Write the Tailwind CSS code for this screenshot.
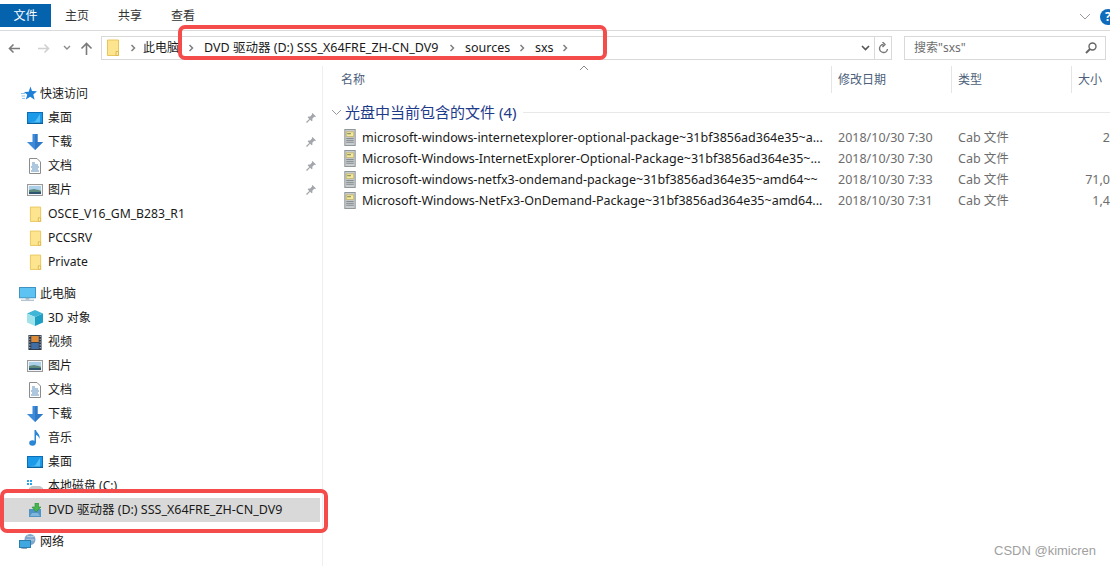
<!DOCTYPE html>
<html lang="zh-CN">
<head>
<meta charset="utf-8">
<script src="https://cdn.jsdelivr.net/npm/@tailwindcss/browser@4"></script>
</head>
<body class="m-0 bg-white">
<svg class="hidden" width="0" height="0">
  <defs>
    <symbol id="folder" viewBox="0 0 14 18">
      <path d="M1.500 1h11v15.500h-11z" fill="#fde58f" stroke="#e8c65a"/>
      <path d="M10 16.500v-4h2.500v4z" fill="#fbe9a8" stroke="#e0b94a"/>
    </symbol>
    <symbol id="chev" viewBox="0 0 6 8">
      <path d="M1.500 1l3 3-3 3" fill="none" stroke="#808080" stroke-width="1.500"/>
    </symbol>
    <symbol id="pin" viewBox="0 0 12 12">
      <path d="M7.500 1l3.500 3.500-1 .6-.7-.3-2 2 .2 1.700-.8.800-1.600-1.600L2 11l-1-1 3.300-3.100-1.700-1.700.8-.8 1.700.2 2-2-.3-.7z" fill="#a3a7ab"/>
    </symbol>
    <symbol id="desktop" viewBox="0 0 16 12">
      <rect x=".5" y=".5" width="15" height="10.500" fill="#1a9ae8" stroke="#0b6fb8"/>
      <path d="M1 10.500L8 9.500 13 2v8.500z" fill="#53bdf6"/>
      <rect x="0" y="11" width="16" height="1" fill="#0a5f99"/>
    </symbol>
    <symbol id="down" viewBox="0 0 16 16">
      <path d="M5.500 0h5v8H16l-8 8-8-8h5.500z" fill="#3d8ad9"/>
      <path d="M8 0h2.500v8H16l-8 8z" fill="#2f78c5"/>
    </symbol>
    <symbol id="doc" viewBox="0 0 12 16">
      <path d="M.5.500h7.500l3.500 3.500v11.500H.5z" fill="#fff" stroke="#8c8c8c"/>
      <path d="M3 5h3M3 7h6M2 9h8M3 11h6M2 13h8" stroke="#5a8fbf" stroke-width="1"/>
    </symbol>
    <symbol id="pic" viewBox="0 0 16 12">
      <rect x=".5" y=".5" width="15" height="11" fill="#f2f2f2" stroke="#9a9a9a"/>
      <rect x="2" y="2" width="12" height="4" fill="#a9cfe9"/>
      <path d="M2 6l5-1 7 1.500V10H2z" fill="#5d8a7c"/>
      <path d="M2 8h12v2H2z" fill="#2f5470"/>
    </symbol>
    <symbol id="star" viewBox="0 0 16 16">
      <path d="M9.500.500l1.500 4.500 5 .3-3.700 3.200 1.300 5.200-4.400-3L4.800 13.500l1.500-4.800L3 6l4.700-.3z" fill="#1e7fd6"/>
      <path d="M0 7.500h4M.5 10h3.500M1 12.500h3" stroke="#8cc1ee" stroke-width="1"/>
    </symbol>
    <symbol id="pc" viewBox="0 0 18 16">
      <rect x=".5" y=".5" width="17" height="11" fill="#5cc3f2" stroke="#3a8fbe"/>
      <path d="M7 11.500h4v2H7z" fill="#9bb6c7"/>
      <path d="M2 13.500h14v1.500H2z" fill="#b5c4ce"/>
    </symbol>
    <symbol id="cube" viewBox="0 0 16 16">
      <path d="M8 0l8 3.500-8 3.500-8-3.500z" fill="#3fb6d6"/>
      <path d="M0 3.500l8 3.500v9l-8-3.500z" fill="#9ee3ea"/>
      <path d="M16 3.500L8 7v9l8-3.500z" fill="#1f9fc4"/>
    </symbol>
    <symbol id="film" viewBox="0 0 14 16">
      <rect width="14" height="16" fill="#2c3a4a"/>
      <rect x="3" y="1" width="8" height="6.500" fill="#d98b3a"/>
      <rect x="3" y="8.500" width="8" height="6.500" fill="#3f6ea5"/>
      <path d="M1 1.500h1M1 4.500h1M1 7.500h1M1 10.500h1M1 13.500h1M12 1.500h1M12 4.500h1M12 7.500h1M12 10.500h1M12 13.500h1" stroke="#dfe5ea" stroke-width="1.200"/>
    </symbol>
    <symbol id="note" viewBox="0 0 12 16">
      <ellipse cx="3.500" cy="13" rx="3.300" ry="2.800" fill="#2b86d6"/>
      <path d="M5.500 13V0h1.500c.5 3 4.500 4 3.500 9-.6-2.500-2-3.500-3.500-4v8z" fill="#2b86d6"/>
    </symbol>
    <symbol id="cab" viewBox="0 0 12 18">
      <rect x=".5" y=".5" width="11" height="17" fill="#c9cdd0" stroke="#8d9296"/>
      <path d="M2 3h8v5H2z" fill="#f3e8a0" stroke="#b7a955" stroke-width=".7"/>
      <path d="M2 10h8M2 12h8M2 14h8" stroke="#7e8589" stroke-width="1"/>
      <path d="M3 5h4" stroke="#6d7a4f" stroke-width="1"/>
    </symbol>
  </defs>
</svg>

<div class="relative w-[1110px] h-[566px] overflow-hidden flex flex-col text-[12px] leading-4 text-[#1a1a1a]" style="font-family:'Noto Sans','Noto Sans CJK SC',sans-serif">
  <!-- Ribbon tabs -->
  <div class="h-[31px] shrink-0 flex items-start border-b border-[#dadada] pt-1 relative">
    <div class="w-[51px] h-[23px] pt-[1px] bg-[#0563ae] text-white flex items-center justify-center">文件</div>
    <div class="ml-[14px] h-[23px] pt-[1px] flex items-center gap-[29px] text-[#333]">
      <span>主页</span><span>共享</span><span>查看</span>
    </div>
    <svg class="absolute left-[1079px] top-[13px]" width="12" height="7" viewBox="0 0 12 7"><path d="M1 1l5 5 5-5" fill="none" stroke="#9a9a9a" stroke-width="1"/></svg>
    <div class="absolute left-[1100px] top-[9px] w-[16px] h-[16px] rounded-full bg-[#0f6cbd] text-white text-[12px] font-bold pl-[5px] leading-4">?</div>
  </div>

  <!-- Address row -->
  <div class="h-[24px] mt-[5px] shrink-0 flex items-center">
    <div class="w-[101px] shrink-0 flex items-center">
      <svg class="ml-[8px]" width="13" height="11" viewBox="0 0 13 11"><path d="M12 5.500H1.500M5.500 1.500l-4 4 4 4" fill="none" stroke="#7a7a7a" stroke-width="1.600"/></svg>
      <svg class="ml-[16px]" width="13" height="11" viewBox="0 0 13 11"><path d="M1 5.500h10.500M7.500 1.500l4 4-4 4" fill="none" stroke="#d0d0d0" stroke-width="1.600"/></svg>
      <svg class="ml-[13px]" width="8" height="6" viewBox="0 0 8 6"><path d="M1 1l3 3 3-3" fill="none" stroke="#8a8a8a" stroke-width="1.400"/></svg>
      <svg class="ml-[9px]" width="13" height="13" viewBox="0 0 13 13"><path d="M6.500 13V2M1.500 6.500l5-5 5 5" fill="none" stroke="#7a7a7a" stroke-width="1.600"/></svg>
    </div>
    <div class="w-[791px] h-full shrink-0 border border-[#d9d9d9] flex items-center">
      <svg class="ml-[4px] shrink-0" width="14" height="18"><use href="#folder"/></svg>
      <svg class="ml-[10px] shrink-0" width="6" height="8"><use href="#chev"/></svg>
      <span class="ml-[7px] w-[37px] whitespace-nowrap">此电脑</span>
      <svg class="ml-[8px] shrink-0" width="6" height="8"><use href="#chev"/></svg>
      <span class="ml-[10px] w-[236px] whitespace-nowrap text-[12.5px]">DVD 驱动器 (D:) SSS_X64FRE_ZH-CN_DV9</span>
      <svg class="ml-[9px] shrink-0" width="6" height="8"><use href="#chev"/></svg>
      <span class="ml-[10px] w-[46px] whitespace-nowrap text-[12.5px]">sources</span>
      <svg class="ml-[8px] shrink-0" width="6" height="8"><use href="#chev"/></svg>
      <span class="ml-[10px] w-[19px] whitespace-nowrap text-[12.5px]">sxs</span>
      <svg class="ml-[8px] shrink-0" width="6" height="8"><use href="#chev"/></svg>
      <svg class="ml-auto mr-[4px]" width="9" height="6" viewBox="0 0 9 6"><path d="M1 1l3.500 3.500L8 1" fill="none" stroke="#555" stroke-width="1.600"/></svg>
      <div class="w-[17px] h-full border-l border-[#d9d9d9] flex items-center justify-center">
        <svg width="11" height="12" viewBox="0 0 11 12"><path d="M5.500 2.500a4 4 0 1 0 4 4.500M4.500 0l2.500 2.500-2.500 2.500" fill="none" stroke="#777" stroke-width="1.400"/></svg>
      </div>
    </div>
    <div class="ml-[12px] w-[202px] h-full shrink-0 border border-[#d9d9d9] flex items-center pl-[9px] pr-[8px] text-[#6d6d6d]">
      <span>搜索"sxs"</span>
      <svg class="ml-auto" width="12" height="12" viewBox="0 0 12 12"><circle cx="7.500" cy="4.500" r="3.500" fill="none" stroke="#666" stroke-width="1.400"/><path d="M5 7l-4 4" stroke="#666" stroke-width="2"/></svg>
    </div>
  </div>

  <!-- Main -->
  <div class="flex-1 mt-[6px] flex min-h-0">
    <!-- Navigation pane -->
    <nav class="w-[323px] shrink-0 border-r border-[#efefef] pt-[16px]">
      <div class="h-6 flex items-center pl-[21px]"><svg width="16" height="16"><use href="#star"/></svg><span class="ml-[3px]">快速访问</span></div>
      <div class="h-6 flex items-center pl-[27px]"><svg width="16" height="12"><use href="#desktop"/></svg><span class="ml-[5px]">桌面</span><svg class="ml-auto mr-[5px]" width="12" height="12"><use href="#pin"/></svg></div>
      <div class="h-6 flex items-center pl-[27px]"><svg width="16" height="16"><use href="#down"/></svg><span class="ml-[5px]">下载</span><svg class="ml-auto mr-[5px]" width="12" height="12"><use href="#pin"/></svg></div>
      <div class="h-6 flex items-center pl-[29px]"><svg width="12" height="16"><use href="#doc"/></svg><span class="ml-[7px]">文档</span><svg class="ml-auto mr-[5px]" width="12" height="12"><use href="#pin"/></svg></div>
      <div class="h-6 flex items-center pl-[27px]"><svg width="16" height="12"><use href="#pic"/></svg><span class="ml-[5px]">图片</span><svg class="ml-auto mr-[5px]" width="12" height="12"><use href="#pin"/></svg></div>
      <div class="h-6 flex items-center pl-[29px]"><svg width="13" height="17"><use href="#folder"/></svg><span class="ml-[6px] text-[12.2px]">OSCE_V16_GM_B283_R1</span></div>
      <div class="h-6 flex items-center pl-[29px]"><svg width="13" height="17"><use href="#folder"/></svg><span class="ml-[6px] text-[12.2px]">PCCSRV</span></div>
      <div class="h-6 flex items-center pl-[29px]"><svg width="13" height="17"><use href="#folder"/></svg><span class="ml-[6px] text-[12.2px]">Private</span></div>

      <div class="h-6 mt-2 flex items-center pl-[19px]"><svg width="17" height="15"><use href="#pc"/></svg><span class="ml-[4px]">此电脑</span></div>
      <div class="h-6 flex items-center pl-[27px]"><svg width="16" height="16"><use href="#cube"/></svg><span class="ml-[5px]">3D 对象</span></div>
      <div class="h-6 flex items-center pl-[28px]"><svg width="14" height="15"><use href="#film"/></svg><span class="ml-[6px]">视频</span></div>
      <div class="h-6 flex items-center pl-[27px]"><svg width="16" height="12"><use href="#pic"/></svg><span class="ml-[5px]">图片</span></div>
      <div class="h-6 flex items-center pl-[29px]"><svg width="12" height="16"><use href="#doc"/></svg><span class="ml-[7px]">文档</span></div>
      <div class="h-6 flex items-center pl-[27px]"><svg width="16" height="16"><use href="#down"/></svg><span class="ml-[5px]">下载</span></div>
      <div class="h-6 flex items-center pl-[29px]"><svg width="12" height="16"><use href="#note"/></svg><span class="ml-[7px]">音乐</span></div>
      <div class="h-6 flex items-center pl-[27px]"><svg width="16" height="12"><use href="#desktop"/></svg><span class="ml-[5px]">桌面</span></div>
      <div class="h-6 flex items-center pl-[27px]">
        <svg width="16" height="14" viewBox="0 0 16 14"><path d="M0 1h2v2H0zM3 1h2v2H3zM0 4h2v2H0zM3 4h2v2H3z" fill="#2aa5ea"/><path d="M2 9l3-2h8l3 2v4H2z" fill="#c4c7ca"/></svg>
        <span class="ml-[5px]">本地磁盘 (C:)</span>
      </div>
      <div class="h-6 ml-[2px] w-[318px] bg-[#d9d9d9] flex items-center pl-[26px]">
        <svg width="14" height="15" viewBox="0 0 14 15"><path d="M1 6h12v8H1z" fill="#4f93c7"/><path d="M2 13l2-3h6l2 3z" fill="#7fb6dc"/><path d="M7 0h3.500v4H13L8 9 4 4h3z" fill="#45b649" stroke="#2d8a35" stroke-width=".6"/></svg>
        <span class="ml-[6px] whitespace-nowrap text-[12.5px]">DVD 驱动器 (D:) SSS_X64FRE_ZH-CN_DV9</span>
      </div>
      <div class="h-6 mt-2 flex items-center pl-[19px]">
        <svg width="17" height="16" viewBox="0 0 17 16"><circle cx="11" cy="5.500" r="5.500" fill="#7fa7cc"/><path d="M8 2c2 1 5 1 7 0M7 6h8" stroke="#d5e4f0" stroke-width=".8" fill="none"/><rect x=".5" y="6.500" width="11" height="7" fill="#3fa8e0" stroke="#2a7fb0"/><path d="M4 14h4v1H2v-.5z" fill="#8fa6b6"/></svg>
        <span class="ml-[4px]">网络</span>
      </div>
    </nav>

    <!-- Content -->
    <section class="flex-1 min-w-0">
      <div class="h-[27px] flex relative text-[#4c607a]">
        <div class="w-[509px] shrink-0 border-r border-[#e5e5e5] pl-[18px] flex items-center">名称</div>
        <div class="w-[120px] shrink-0 border-r border-[#e5e5e5] pl-[6px] flex items-center">修改日期</div>
        <div class="w-[120px] shrink-0 border-r border-[#e5e5e5] pl-[6px] flex items-center">类型</div>
        <div class="flex-1 pl-[6px] flex items-center whitespace-nowrap">大小</div>
        <svg class="absolute left-[256px] top-[-1px]" width="10" height="6" viewBox="0 0 10 6"><path d="M1 5l4-4 4 4" fill="none" stroke="#8a8a8a" stroke-width="1"/></svg>
      </div>
      <div class="h-[22px] mt-[8px] flex items-center pl-[8px]">
        <svg width="11" height="7" viewBox="0 0 11 7"><path d="M1 1l4.500 4.500L10 1" fill="none" stroke="#9a9a9a" stroke-width="1"/></svg>
        <span class="ml-[3px] text-[15px] text-[#1e3a8a] whitespace-nowrap">光盘中当前包含的文件 (4)</span>
        <div class="ml-[7px] flex-1 h-px bg-[#e8e8e8]"></div>
      </div>
      <div class="mt-[4px] text-[12.5px]">
        <div class="h-[21px] flex items-center">
          <svg class="ml-[21px] shrink-0" width="12" height="17"><use href="#cab"/></svg>
          <span class="ml-[6px] w-[476px] shrink-0 whitespace-nowrap overflow-hidden">microsoft-windows-internetexplorer-optional-package~31bf3856ad364e35~a...</span>
          <span class="w-[120px] shrink-0 text-[#6d6d6d]">2018/10/30 7:30</span>
          <span class="w-[100px] shrink-0 text-[#6d6d6d]">Cab 文件</span>
          <span class="flex-1 text-right text-[#6d6d6d]">2</span>
        </div>
        <div class="h-[21px] flex items-center">
          <svg class="ml-[21px] shrink-0" width="12" height="17"><use href="#cab"/></svg>
          <span class="ml-[6px] w-[476px] shrink-0 whitespace-nowrap overflow-hidden">Microsoft-Windows-InternetExplorer-Optional-Package~31bf3856ad364e35~...</span>
          <span class="w-[120px] shrink-0 text-[#6d6d6d]">2018/10/30 7:30</span>
          <span class="w-[100px] shrink-0 text-[#6d6d6d]">Cab 文件</span>
        </div>
        <div class="h-[21px] flex items-center">
          <svg class="ml-[21px] shrink-0" width="12" height="17"><use href="#cab"/></svg>
          <span class="ml-[6px] w-[476px] shrink-0 whitespace-nowrap overflow-hidden">microsoft-windows-netfx3-ondemand-package~31bf3856ad364e35~amd64~~</span>
          <span class="w-[120px] shrink-0 text-[#6d6d6d]">2018/10/30 7:33</span>
          <span class="w-[100px] shrink-0 text-[#6d6d6d]">Cab 文件</span>
          <span class="flex-1 text-right text-[#6d6d6d]">71,0</span>
        </div>
        <div class="h-[21px] flex items-center">
          <svg class="ml-[21px] shrink-0" width="12" height="17"><use href="#cab"/></svg>
          <span class="ml-[6px] w-[476px] shrink-0 whitespace-nowrap overflow-hidden">Microsoft-Windows-NetFx3-OnDemand-Package~31bf3856ad364e35~amd64...</span>
          <span class="w-[120px] shrink-0 text-[#6d6d6d]">2018/10/30 7:31</span>
          <span class="w-[100px] shrink-0 text-[#6d6d6d]">Cab 文件</span>
          <span class="flex-1 text-right text-[#6d6d6d]">1,4</span>
        </div>
      </div>
    </section>
  </div>

  <!-- Red annotations -->
  <div class="absolute left-[178px] top-[25px] w-[429px] h-[35px] border-4 border-[#f44b4b] rounded-[7px]"></div>
  <div class="absolute left-0 top-[489px] w-[328px] h-[44px] border-4 border-[#f44b4b] rounded-[7px]"></div>
  <!-- Watermark -->
  <div class="absolute left-[994px] top-[543px] text-[13px] text-[#a0a0a0]" style="font-family:'Liberation Sans',sans-serif">CSDN @kimicren</div>
</div>
</body>
</html>
